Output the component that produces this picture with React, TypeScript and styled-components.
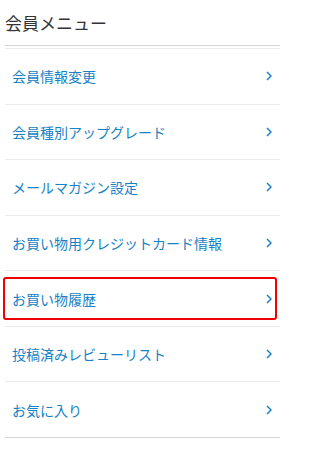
import React, { FC } from "react";
import styled, { createGlobalStyle } from "styled-components";

const GlobalStyle = createGlobalStyle`
    html, body {
        margin: 0;
        padding: 0;
        background: #ffffff;
    }
    body {
        font-family: "Noto Sans CJK JP", "Liberation Sans", sans-serif;
    }
`;

const Page = styled.div`
    width: 280px;
    padding-left: 5px;
    box-sizing: border-box;
`;

const Title = styled.h1`
    margin: 0;
    height: 46px;
    display: flex;
    align-items: center;
    font-size: 17px;
    font-weight: 400;
    color: #333333;
    line-height: 1;
    padding-bottom: 1px;
    box-sizing: border-box;
    border-bottom: 1px solid #d4d4d4;
`;

const Menu = styled.ul`
    list-style: none;
    margin: 2px 0 0;
    padding: 0;
    border-top: 1px solid #ececec;
`;

const Item = styled.li<{ $last?: boolean; $active?: boolean }>`
    position: relative;
    height: 54.57px;
    display: flex;
    align-items: center;
    justify-content: space-between;
    padding: 0 8px 0 7px;
    border-bottom: 1px solid ${(p) => (p.$last ? "#d6d6d6" : "#ececec")};

    &::after {
        content: "";
        display: ${(p) => (p.$active ? "block" : "none")};
        position: absolute;
        left: -2px;
        right: 3px;
        top: 6px;
        bottom: 6px;
        border: 2px solid #f00000;
        border-radius: 3px;
        pointer-events: none;
    }
`;

const Label = styled.span`
    font-size: 14px;
    color: #1782c5;
    letter-spacing: 0;
`;

const Chevron = styled.svg`
    width: 6px;
    height: 10px;
    flex-shrink: 0;
`;

const items = [
    "会員情報変更",
    "会員種別アップグレード",
    "メールマガジン設定",
    "お買い物用クレジットカード情報",
    "お買い物履歴",
    "投稿済みレビューリスト",
    "お気に入り",
];

const MemberMenu: FC = () => {
    return (
        <Page>
            <Title>会員メニュー</Title>
            <Menu>
                {items.map((label, i) => (
                    <Item
                        key={label}
                        $active={i === 4}
                        $last={i === items.length - 1}
                    >
                        <Label>{label}</Label>
                        <Chevron viewBox="0 0 6 10">
                            <path
                                d="M1 1l4 4-4 4"
                                fill="none"
                                stroke="#1782c5"
                                strokeWidth="1.5"
                            />
                        </Chevron>
                    </Item>
                ))}
            </Menu>
        </Page>
    );
};

const App: FC = () => (
    <>
        <GlobalStyle />
        <MemberMenu />
    </>
);

export default App;
